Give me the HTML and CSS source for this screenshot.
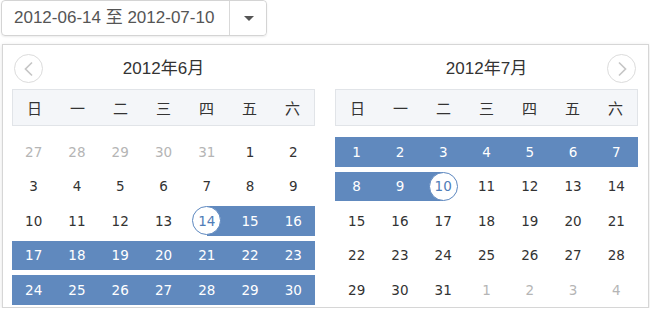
FILE: index.html
```html
<!DOCTYPE html>
<html lang="zh-CN">
<head>
  <meta charset="UTF-8">
  <title>日期范围选择</title>
  <link rel="stylesheet" href="styles.css">
</head>
<body>
  <div class="range-input">
    <div class="range-text">2012-06-14 至 2012-07-10</div>
    <button class="range-toggle" type="button"><span class="caret"></span></button>
  </div>

  <div class="picker">
    <div class="month">
      <div class="month-head">
        <button class="nav prev" type="button">
          <svg width="12" height="16" viewBox="0 0 12 16"><path d="M9 1.5L2.5 8L9 14.5" fill="none" stroke="#c6c6c6" stroke-width="1.7"/></svg>
        </button>
        <span class="month-title">2012年6月</span>
      </div>
      <div class="weekdays"><span>日</span><span>一</span><span>二</span><span>三</span><span>四</span><span>五</span><span>六</span></div>
      <div class="days">
        <span class="other">27</span><span class="other">28</span><span class="other">29</span><span class="other">30</span><span class="other">31</span><span>1</span><span>2</span>
        <span>3</span><span>4</span><span>5</span><span>6</span><span>7</span><span>8</span><span>9</span>
        <span>10</span><span>11</span><span>12</span><span>13</span><span class="start"><i>14</i></span><span class="in">15</span><span class="in">16</span>
        <span class="in">17</span><span class="in">18</span><span class="in">19</span><span class="in">20</span><span class="in">21</span><span class="in">22</span><span class="in">23</span>
        <span class="in">24</span><span class="in">25</span><span class="in">26</span><span class="in">27</span><span class="in">28</span><span class="in">29</span><span class="in">30</span>
      </div>
    </div>

    <div class="month">
      <div class="month-head">
        <span class="month-title">2012年7月</span>
        <button class="nav next" type="button">
          <svg width="12" height="16" viewBox="0 0 12 16"><path d="M3 1.5L9.5 8L3 14.5" fill="none" stroke="#c6c6c6" stroke-width="1.7"/></svg>
        </button>
      </div>
      <div class="weekdays"><span>日</span><span>一</span><span>二</span><span>三</span><span>四</span><span>五</span><span>六</span></div>
      <div class="days">
        <span class="in">1</span><span class="in">2</span><span class="in">3</span><span class="in">4</span><span class="in">5</span><span class="in">6</span><span class="in">7</span>
        <span class="in">8</span><span class="in">9</span><span class="end"><i>10</i></span><span>11</span><span>12</span><span>13</span><span>14</span>
        <span>15</span><span>16</span><span>17</span><span>18</span><span>19</span><span>20</span><span>21</span>
        <span>22</span><span>23</span><span>24</span><span>25</span><span>26</span><span>27</span><span>28</span>
        <span>29</span><span>30</span><span>31</span><span class="other">1</span><span class="other">2</span><span class="other">3</span><span class="other">4</span>
      </div>
    </div>
  </div>
</body>
</html>
```

FILE: styles.css
```css
body {
  margin: 0;
  background: #fff;
  font-family: "Liberation Sans", Arial, "Noto Sans CJK SC", sans-serif;
  color: #333;
}

.range-input {
  display: flex;
  width: 264px;
  height: 34px;
  margin: 0 0 0 1px;
  border: 1px solid #d4d4d4;
  border-radius: 4px;
  box-shadow: 0 1px 2px rgba(0,0,0,0.08);
}
.range-text {
  width: 215px;
  padding-left: 12px;
  line-height: 34px;
  font-size: 17px;
  color: #555;
  border-right: 1px solid #d9d9d9;
  white-space: nowrap;
}
.range-toggle {
  flex: 1;
  border: 0;
  background: #fff;
  border-radius: 0 4px 4px 0;
  padding: 0;
  display: flex;
  align-items: center;
  justify-content: center;
}
.caret {
  width: 0;
  height: 0;
  border-left: 5px solid transparent;
  border-right: 5px solid transparent;
  border-top: 5px solid #555;
  margin-left: 1px;
}

.picker {
  display: flex;
  gap: 20px;
  margin: 8px 0 0 2px;
  width: 630px;
  height: 262px;
  padding: 0 6px 0 9px;
  border: 1px solid #d6d6d6;
  box-shadow: 0 1px 4px rgba(0,0,0,0.12);
  overflow: hidden;
}
.month { width: 303px; }
.month-head {
  position: relative;
  height: 44px;
  display: flex;
  align-items: center;
  justify-content: center;
}
.month-title {
  font-size: 17px;
  color: #333;
  margin-top: -1px;
}
.nav {
  position: absolute;
  top: 9px;
  width: 29px;
  height: 29px;
  padding: 0;
  border: 1px solid #dcdcdc;
  border-radius: 50%;
  background: #fff;
  display: flex;
  align-items: center;
  justify-content: center;
}
.nav.prev { left: 2px; }
.nav.next { right: 2px; }

.weekdays {
  display: grid;
  grid-template-columns: repeat(7, 1fr);
  height: 35px;
  background: #f4f6f9;
  border: 1px solid #e1e4e8;
  font-family: "Noto Sans CJK SC", sans-serif;
  font-size: 15px;
  color: #333;
}
.weekdays span {
  display: flex;
  align-items: center;
  justify-content: center;
}

.days {
  display: grid;
  grid-template-columns: repeat(7, 1fr);
  grid-auto-rows: 29.5px;
  row-gap: 5px;
  margin-top: 11px;
  font-family: "DejaVu Sans", Verdana, sans-serif;
  font-size: 13.5px;
  color: #333;
}
.days span {
  display: flex;
  align-items: center;
  justify-content: center;
}
.days .other { color: #b5b5b5; }
.days .in { background: #6089be; color: #fff; }
.days .start { background: linear-gradient(to right, transparent 50%, #6089be 50%); }
.days .end { background: linear-gradient(to right, #6089be 50%, transparent 50%); }
.days i {
  font-style: normal;
  width: 27px;
  height: 27px;
  border: 1px solid #5c87bf;
  border-radius: 50%;
  background: #fff;
  color: #4f7db8;
  display: flex;
  align-items: center;
  justify-content: center;
}
```
